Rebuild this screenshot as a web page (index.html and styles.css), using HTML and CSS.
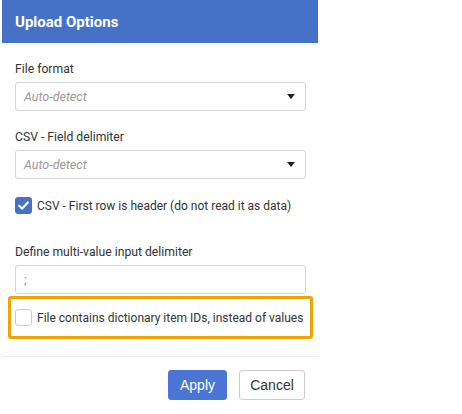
FILE: index.html
```html
<!DOCTYPE html>
<html>
<head>
<meta charset="utf-8">
<link rel="stylesheet" href="styles.css">
</head>
<body>
<div class="dialog">
  <div class="header">Upload Options</div>
  <div class="content">
    <label class="label first">File format</label>
    <div class="select"><span class="placeholder">Auto-detect</span><span class="caret"></span></div>
    <label class="label">CSV - Field delimiter</label>
    <div class="select"><span class="placeholder">Auto-detect</span><span class="caret"></span></div>
    <div class="check-row">
      <span class="box checked"><svg viewBox="0 0 17 17" width="17" height="17"><path d="M4.2 8.8 L7.2 11.6 L12.8 5.4" fill="none" stroke="#fff" stroke-width="2.2" stroke-linecap="round" stroke-linejoin="round"/></svg></span>
      <span class="check-label">CSV - First row is header (do not read it as data)</span>
    </div>
    <label class="label third">Define multi-value input delimiter</label>
    <div class="input">;</div>
    <div class="highlight">
      <span class="box"></span>
      <span class="check-label">File contains dictionary item IDs, instead of values</span>
    </div>
  </div>
  <div class="footer">
    <button class="btn primary">Apply</button>
    <button class="btn">Cancel</button>
  </div>
</div>
</body>
</html>
```
FILE: styles.css
```css
* { box-sizing: border-box; }
html, body { margin: 0; padding: 0; background: #fff; }
body { font-family: Roboto, "Liberation Sans", sans-serif; color: #333; }
.dialog { width: 316px; margin-left: 2px; }
.header {
  height: 43px;
  background: #4572c6;
  color: #fff;
  font-weight: 700;
  font-size: 15px;
  display: flex;
  align-items: center;
  padding-left: 13px;
}
.content { display: flex; flex-direction: column; padding: 0 13px; }
.label { display: block; font-size: 12.2px; line-height: 16px; color: #333; margin: 18px 0 5px 0; }
.label.first { margin-top: 18px; }
.label.third { margin-top: 30px; }
.select, .input {
  height: 29px;
  border: 1px solid #d4d4d4;
  border-radius: 3px;
  display: flex;
  align-items: center;
  padding: 0 10px 0 8px;
  width: 291px;
}
.select { justify-content: space-between; }
.placeholder { font-style: italic; color: #999; font-size: 12.5px; }
.caret {
  width: 0; height: 0;
  border-left: 4.5px solid transparent;
  border-right: 4.5px solid transparent;
  border-top: 5px solid #222;
}
.input { color: #888; font-size: 13px; }
.check-row { display: flex; align-items: center; margin-top: 18px; height: 17px; gap: 5px; }
.box {
  width: 17px; height: 17px;
  border: 1px solid #ccc;
  border-radius: 3px;
  background: #fff;
  flex: none;
  display: flex;
}
.box.checked { background: #4572c6; border-color: #4572c6; }
.box.checked svg { margin: -1px; }
.check-label { font-size: 12px; color: #333; white-space: nowrap; }
.highlight {
  margin: 2px -8px 0 -7px;
  height: 43px;
  border: 3px solid #f0a400;
  border-radius: 3px;
  display: flex;
  align-items: center;
  padding-left: 4px;
  gap: 5px;
}
.footer {
  margin-top: 17px;
  border-top: 1px solid #eee;
  display: flex;
  justify-content: flex-end;
  gap: 12px;
  padding: 13px 13px 0 0;
}
.btn {
  height: 30px;
  border-radius: 3px;
  font-family: "Liberation Sans", Arial, sans-serif;
  font-size: 14px;
  border: 1px solid #ccc;
  background: #fff;
  color: #333;
  padding: 0;
  width: 66px;
}
.btn.primary { background: #4a75d4; border-color: #4a75d4; color: #fff; width: 59px; }
```
